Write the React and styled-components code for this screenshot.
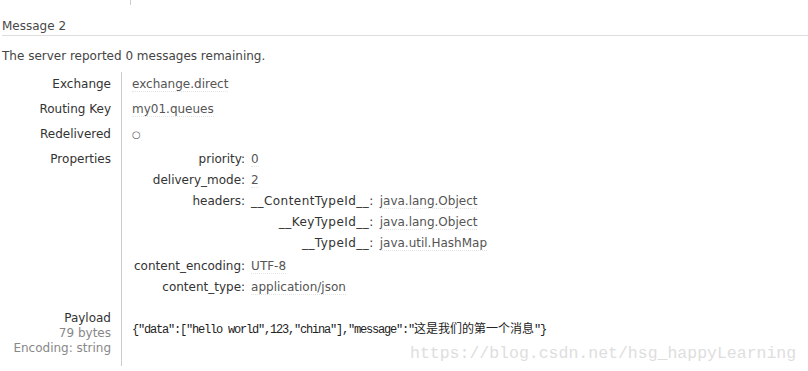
import * as React from "react";
import styled, { createGlobalStyle } from "styled-components";

const GlobalStyle = createGlobalStyle`
  html, body {
    margin: 0;
    padding: 0;
    background: #fff;
  }
  body {
    font-family: "DejaVu Sans", Verdana, sans-serif;
    font-size: 12px;
    color: #444;
  }
`;

const Page = styled.div`
  position: relative;
  width: 808px;
  height: 371px;
  overflow: hidden;
  padding: 0 0 0 2px;
  box-sizing: border-box;
`;

const PrevDivider = styled.div`
  margin-left: 128px;
  width: 0;
  height: 5px;
  border-left: 1px solid #ccc;
`;

const Heading = styled.h3`
  margin: 14px 0 0;
  padding: 0 0 1px;
  font-size: 12px;
  font-weight: normal;
  line-height: 15px;
  color: #484848;
  border-bottom: 1px solid #ddd;
`;

const Summary = styled.p`
  margin: 13px 0 0;
  line-height: 15px;
  color: #444;
`;

const Table = styled.table`
  border-collapse: collapse;
  margin-top: 8px;
`;

const Label = styled.th`
  width: 109px;
  padding: ${(p) => (p.$tall ? "5px 10px 10px 0" : "5px 10px 5px 0")};
  border-right: 1px solid #ccc;
  text-align: right;
  vertical-align: top;
  font-weight: normal;
  line-height: 15px;
  color: #333;
`;

const Sub = styled.div`
  color: #888;
`;

const Value = styled.td`
  padding: ${(p) => (p.$pad ? p.$pad : "5px 0 5px 10px")};
  vertical-align: top;
  line-height: 15px;
  color: #555;
`;

const Underlined = styled.span`
  border-bottom: 1px dotted #e4e4e4;
`;

const Redelivered = styled.span`
  font-size: 10px;
  color: #555;
`;

const Props = styled.table`
  border-collapse: collapse;
  margin-left: ${(p) => (p.$nested ? "0" : "2px")};
`;

const PropKey = styled.th`
  padding: 0 6px ${(p) => (p.$bottom ? p.$bottom : "6px")} 0;
  text-align: right;
  vertical-align: top;
  font-weight: normal;
  line-height: 15px;
  letter-spacing: ${(p) => (p.$wide ? "0.45px" : "0")};
  color: #333;
  white-space: nowrap;
`;

const PropVal = styled.td`
  padding: 0 0 ${(p) => (p.$bottom ? p.$bottom : "6px")} 0;
  vertical-align: top;
  line-height: 15px;
  color: #555;
  white-space: nowrap;
`;

const Payload = styled.div`
  padding-top: 9px;
  font-family: "Liberation Mono", "Noto Sans CJK SC", monospace;
  font-size: 12px;
  letter-spacing: -1.2px;
  color: #222;
  white-space: nowrap;
`;

const Cjk = styled.span`
  font-family: "Noto Sans CJK SC", sans-serif;
  letter-spacing: 0;
`;

const Watermark = styled.div`
  position: absolute;
  left: 410px;
  top: 344px;
  font-family: "Liberation Mono", monospace;
  font-size: 16.5px;
  color: #dedede;
  white-space: nowrap;
`;

const PropRow = ({ k, v, bottom, wide }) => (
  <tr>
    <PropKey $bottom={bottom} $wide={wide}>
      {k}:
    </PropKey>
    <PropVal $bottom={bottom}>{v}</PropVal>
  </tr>
);

const headers = [
  ["__ContentTypeId__", "java.lang.Object"],
  ["__KeyTypeId__", "java.lang.Object"],
  ["__TypeId__", "java.util.HashMap"],
];

const App = () => (
  <Page>
    <GlobalStyle />
    <PrevDivider />
    <Heading>Message 2</Heading>
    <Summary>The server reported 0 messages remaining.</Summary>
    <Table>
      <tbody>
        <tr>
          <Label>Exchange</Label>
          <Value>
            <Underlined>exchange.direct</Underlined>
          </Value>
        </tr>
        <tr>
          <Label>Routing Key</Label>
          <Value>
            <Underlined>my01.queues</Underlined>
          </Value>
        </tr>
        <tr>
          <Label>Redelivered</Label>
          <Value>
            <Redelivered>○</Redelivered>
          </Value>
        </tr>
        <tr>
          <Label>Properties</Label>
          <Value $pad="5px 0 11px 10px">
            <Props>
              <tbody>
                <PropRow k="priority" v={<Underlined>0</Underlined>} />
                <PropRow k="delivery_mode" v={<Underlined>2</Underlined>} />
                <tr>
                  <PropKey $bottom="8px">headers:</PropKey>
                  <PropVal $bottom="8px">
                    <Props $nested>
                      <tbody>
                        {headers.map(([k, v], i) => (
                          <PropRow
                            key={k}
                            k={k}
                            wide
                            v={<Underlined>{v}</Underlined>}
                            bottom={i === headers.length - 1 ? "0" : "6px"}
                          />
                        ))}
                      </tbody>
                    </Props>
                  </PropVal>
                </tr>
                <PropRow k="content_encoding" v={<Underlined>UTF-8</Underlined>} />
                <PropRow
                  k="content_type"
                  v={<Underlined>application/json</Underlined>}
                  bottom="0"
                />
              </tbody>
            </Props>
          </Value>
        </tr>
        <tr>
          <Label $tall>
            Payload
            <Sub>79 bytes</Sub>
            <Sub>Encoding: string</Sub>
          </Label>
          <Value>
            <Payload>
              {'{"data":["hello world",123,"china"],"message":"'}
              <Cjk>这是我们的第一个消息</Cjk>
              {'"}'}
            </Payload>
          </Value>
        </tr>
      </tbody>
    </Table>
    <Watermark>https://blog.csdn.net/hsg_happyLearning</Watermark>
  </Page>
);

export default App;
